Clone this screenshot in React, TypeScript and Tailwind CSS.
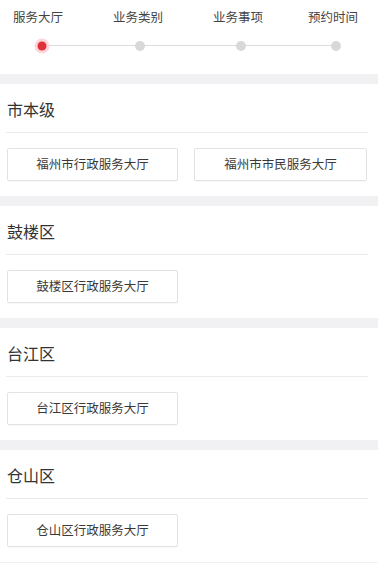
import React from 'react';

const steps = [
    { label: '服务大厅', dot: 42, gap: 'ml-[13px]' },
    { label: '业务类别', dot: 140, gap: 'ml-[50px]' },
    { label: '业务事项', dot: 241, gap: 'ml-[50px]' },
    { label: '预约时间', dot: 336, gap: 'ml-[45px]' },
];

const groups = [
    { title: '市本级', halls: ['福州市行政服务大厅', '福州市市民服务大厅'] },
    { title: '鼓楼区', halls: ['鼓楼区行政服务大厅'] },
    { title: '台江区', halls: ['台江区行政服务大厅'] },
    { title: '仓山区', halls: ['仓山区行政服务大厅'] },
];

const Stepper: React.FC = () => (
    <div className="relative h-[74px]">
        <div className="flex pt-[8px] text-[12.5px] leading-[17px] text-[#444]">
            {steps.map((s) => (
                <span key={s.label} className={`${s.gap} w-[50px] whitespace-nowrap`}>
                    {s.label}
                </span>
            ))}
        </div>
        <div className="absolute left-[42px] top-[45px] h-px w-[294px] bg-[#dcdcdc]"></div>
        {steps.map((s, i) => (
            <div
                key={s.label}
                className={`absolute top-[45.5px] -translate-x-1/2 -translate-y-1/2 rounded-full ${
                    i === 0
                        ? 'h-[9px] w-[9px] bg-[#e0313a] ring-[3px] ring-[#fcd6d8]'
                        : 'h-[10px] w-[10px] bg-[#d8d8d8]'
                }`}
                style={{ left: s.dot }}
            ></div>
        ))}
    </div>
);

export default function App() {
    return (
        <div
            className="w-[384px] min-h-[563px] bg-white"
            style={{ fontFamily: '"Noto Sans CJK SC", "Noto Sans", sans-serif' }}
        >
            <div className="w-[378px]">
                <Stepper />
                {groups.map((g) => (
                    <div key={g.title}>
                        <div className="h-[10px] bg-[#f1f1f3]"></div>
                        <div className="pl-[6px] pr-[10px]">
                            <div className="flex h-[48px] items-center pl-px pt-px text-[16px] text-[#333]">
                                {g.title}
                            </div>
                            <div className="h-px bg-[#ebebeb]"></div>
                            <div className="grid grid-cols-[171px_173px] gap-[16px] pt-[15px] pb-[15px] pl-px">
                                {g.halls.map((h) => (
                                    <button
                                        key={h}
                                        className="flex h-[33px] items-center justify-center rounded-[2px] border border-[#e3e3e3] bg-white text-[12.5px] text-[#3a3a3a] shadow-[0_1px_1px_rgba(0,0,0,0.03)]"
                                    >
                                        {h}
                                    </button>
                                ))}
                            </div>
                        </div>
                    </div>
                ))}
                <div className="h-[10px] bg-[#f1f1f3]"></div>
            </div>
        </div>
    );
}
